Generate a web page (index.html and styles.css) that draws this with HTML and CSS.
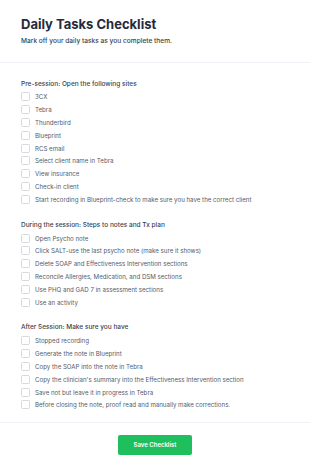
FILE: index.html
```html
<!DOCTYPE html>
<html>
<head>
<meta charset="utf-8">
<link rel="stylesheet" href="styles.css">
</head>
<body>
<header class="header">
  <h1 class="title">Daily Tasks Checklist</h1>
  <p class="subtitle">Mark off your daily tasks as you complete them.</p>
</header>
<main class="main">
  <section class="section">
    <h2 class="heading">Pre-session: Open the following sites</h2>
    <label class="item"><span class="box"></span>3CX</label>
    <label class="item"><span class="box"></span>Tebra</label>
    <label class="item"><span class="box"></span>Thunderbird</label>
    <label class="item"><span class="box"></span>Blueprint</label>
    <label class="item"><span class="box"></span>RCS email</label>
    <label class="item"><span class="box"></span>Select client name in Tebra</label>
    <label class="item"><span class="box"></span>View insurance</label>
    <label class="item"><span class="box"></span>Check-in client</label>
    <label class="item"><span class="box"></span>Start recording in Blueprint-check to make sure you have the correct client</label>
  </section>
  <section class="section">
    <h2 class="heading">During the session: Steps to notes and Tx plan</h2>
    <label class="item"><span class="box"></span>Open Psycho note</label>
    <label class="item"><span class="box"></span>Click SALT-use the last psycho note (make sure it shows)</label>
    <label class="item"><span class="box"></span>Delete SOAP and Effectiveness Intervention sections</label>
    <label class="item"><span class="box"></span>Reconcile Allergies, Medication, and DSM sections</label>
    <label class="item"><span class="box"></span>Use PHQ and GAD 7 in assessment sections</label>
    <label class="item"><span class="box"></span>Use an activity</label>
  </section>
  <section class="section">
    <h2 class="heading">After Session: Make sure you have</h2>
    <label class="item"><span class="box"></span>Stopped recording</label>
    <label class="item"><span class="box"></span>Generate the note in Blueprint</label>
    <label class="item"><span class="box"></span>Copy the SOAP into the note in Tebra</label>
    <label class="item"><span class="box"></span>Copy the clinician's summary into the Effectiveness Intervention section</label>
    <label class="item"><span class="box"></span>Save not but leave it in progress in Tebra</label>
    <label class="item"><span class="box"></span>Before closing the note, proof read and manually make corrections.</label>
  </section>
</main>
<footer class="footer">
  <button class="save">Save Checklist</button>
</footer>
</body>
</html>
```

FILE: styles.css
```css
html, body {
  margin: 0;
  padding: 0;
  background: #ffffff;
  font-family: Inter, "Noto Sans", sans-serif;
}
.header {
  padding: 16px 21px 16px;
  border-bottom: 1px solid #f0f0f6;
}
.title {
  margin: 0;
  font-size: 13px;
  line-height: 16px;
  font-weight: 700;
  color: #272a3b;
}
.subtitle {
  margin: 4.5px 0 0;
  font-size: 6.6px;
  line-height: 9px;
  font-weight: 500;
  color: #3a3f4f;
}
.main {
  padding: 15px 21px 10.5px;
  border-bottom: 1px solid #f0f0f6;
}
.section + .section {
  margin-top: 13px;
}
.heading {
  margin: 0;
  font-size: 6.5px;
  line-height: 13px;
  font-weight: 500;
  color: #3a3f4f;
}
.item {
  display: flex;
  align-items: center;
  gap: 5px;
  height: 12.8px;
  font-size: 6.15px;
  color: #555b69;
}
.box {
  width: 7px;
  height: 7px;
  border: 0.7px solid #d6d9de;
  border-radius: 1.5px;
  background: #fff;
  flex: none;
}
.footer {
  display: flex;
  justify-content: center;
  padding-top: 12.5px;
}
.save {
  width: 74px;
  height: 19.5px;
  border: none;
  border-radius: 2px;
  background: #1fbf5e;
  color: #ffffff;
  font-family: Inter, "Noto Sans", sans-serif;
  font-size: 6px;
  font-weight: 600;
  padding: 0;
}
```
